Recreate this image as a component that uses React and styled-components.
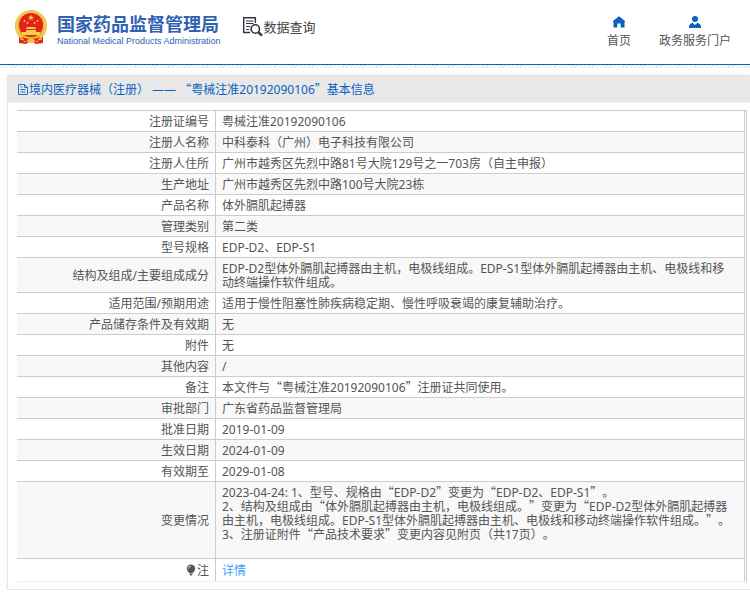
import React from "react";
import styled, { createGlobalStyle } from "styled-components"

const GlobalStyle = createGlobalStyle`
    body {
        margin: 0;
        background-color: #fff;
        color: #555;
        font-family: "Noto Sans", "Noto Sans CJK SC", sans-serif;
        font-size: 12px;
        line-height: 14px;
        text-spacing-trim: space-all;
    }
    a {
        text-decoration: none;
    }
`

const Header = styled.header`
    display: flex;
    align-items: center;
    height: 64px;
    padding: 0 19px 0 14px;
    border-bottom: 1px solid #0a62c0;
`

const Brand = styled.a`
    display: flex;
    align-items: center;
    gap: 9px;
    padding-bottom: 10px;
    color: #2f62b3;
`

const BrandText = styled.div`
    display: flex;
    flex-direction: column;
    gap: 2px;
    padding-top: 5px;
`

const BrandName = styled.h1`
    margin: 0;
    font-family: "Noto Sans CJK SC", sans-serif;
    font-size: 18px;
    font-weight: bold;
    line-height: 20px;
    white-space: nowrap;
`

const BrandEnglish = styled.span`
    font-family: "Liberation Sans", sans-serif;
    font-size: 9px;
    line-height: 12px;
    white-space: nowrap;
`

const SearchLink = styled.a`
    display: flex;
    align-items: center;
    gap: 1px;
    margin-left: 22px;
    padding-bottom: 10px;
    color: #444;
    font-size: 13px;
    white-space: nowrap;
`

const Nav = styled.nav`
    display: flex;
    gap: 28px;
    margin-left: auto;
`

const NavLink = styled.a`
    display: flex;
    flex-direction: column;
    align-items: center;
    gap: 6px;
    color: #555;
    white-space: nowrap;
    & svg {
        color: #0a62c0;
    }
`

const Hatch = styled.div`
    height: 3px;
    background: repeating-linear-gradient(135deg, #e2e2e2 0 1px, #fff 1px 3px);
`

const Panel = styled.main`
    margin: 7px 0 0 7px;
    padding-bottom: 7px;
    border: 1px solid #e6e6e6;
    border-width: 0 0 1px 1px;
    box-shadow: 0 0 5px #eee;
`

const PanelTitle = styled.h2`
    box-sizing: border-box;
    display: flex;
    align-items: center;
    gap: 1px;
    height: 28px;
    margin: 0 0 7px;
    padding: 2px 10px 0;
    border-bottom: 1px solid #eceef8;
    background-color: #e8e8e8;
    color: #0a62c0;
    font-size: 12px;
    font-weight: normal;
`

const TableWrap = styled.div`
    margin: 0 3px 0 9px;
    border-top: 1px solid #ccc;
    border-right: 3px double #ccc;
    border-bottom: 1px solid #ebeef5;
`

const Table = styled.table`
    width: 100%;
    border-spacing: 0;
    & tr:nth-child(even) {
        background-color: #f8f8f8;
    }
    & tr:last-child > * {
        border-bottom: 0;
        padding-top: 5px;
        padding-bottom: 3px;
    }
`

const Label = styled.th`
    box-sizing: border-box;
    width: 199px;
    padding: 4px 6px 2px;
    border-right: 1px solid #ccc;
    border-bottom: 1px solid #ccc;
    font-weight: normal;
    text-align: right;
    & svg {
        margin-right: 1px;
        vertical-align: -1px;
    }
`

const Value = styled.td`
    padding: 4px 10px 2px 6px;
    border-bottom: 1px solid #ccc;
    white-space: pre-line;
`

const Quote = styled.span`
    font-family: "Noto Sans CJK SC", sans-serif;
    line-height: 1px;
`

const DetailLink = styled.a`
    color: #409eff;
`

const rows = [
    { label: "注册证编号", value: "粤械注准20192090106" },
    { label: "注册人名称", value: "中科泰科（广州）电子科技有限公司" },
    { label: "注册人住所", value: "广州市越秀区先烈中路81号大院129号之一703房（自主申报）" },
    { label: "生产地址", value: "广州市越秀区先烈中路100号大院23栋" },
    { label: "产品名称", value: "体外膈肌起搏器" },
    { label: "管理类别", value: "第二类" },
    { label: "型号规格", value: "EDP-D2、EDP-S1" },
    { label: "结构及组成/主要组成成分", value: "EDP-D2型体外膈肌起搏器由主机，电极线组成。EDP-S1型体外膈肌起搏器由主机、电极线和移动终端操作软件组成。" },
    { label: "适用范围/预期用途", value: "适用于慢性阻塞性肺疾病稳定期、慢性呼吸衰竭的康复辅助治疗。" },
    { label: "产品储存条件及有效期", value: "无" },
    { label: "附件", value: "无" },
    { label: "其他内容", value: "/" },
    { label: "备注", value: "本文件与“粤械注准20192090106”注册证共同使用。" },
    { label: "审批部门", value: "广东省药品监督管理局" },
    { label: "批准日期", value: "2019-01-09" },
    { label: "生效日期", value: "2024-01-09" },
    { label: "有效期至", value: "2029-01-08" },
    {
        label: "变更情况",
        value: "2023-04-24: 1、型号、规格由“EDP-D2”变更为“EDP-D2、EDP-S1”。\n2、结构及组成由“体外膈肌起搏器由主机，电极线组成。”变更为“EDP-D2型体外膈肌起搏器由主机，电极线组成。EDP-S1型体外膈肌起搏器由主机、电极线和移动终端操作软件组成。”。\n3、注册证附件“产品技术要求”变更内容见附页（共17页）。\n\n"
    },
]

// curly quotes take the full-width form of the Chinese font
const withQuotes = text =>
    text.split(/([“”])/).map((part, i) => (
        part === "“" || part === "”" ? <Quote key={i}>{part}</Quote> : part
    ))

const Emblem = () => (
    <svg width="34" height="36" viewBox="0 0 34 36" aria-hidden="true">
        <path d="M5 26 L5 34 L12 35 L17 32 L22 35 L29 34 L29 26 Z" fill="#dd2a1e" />
        <circle cx="17" cy="17" r="16" fill="#e9b63a" />
        <circle cx="17" cy="17" r="14.5" fill="none" stroke="#f3cb55" strokeWidth="2" />
        <circle cx="17" cy="16" r="12" fill="#e3221b" />
        <path d="M17 5.5 L17.8 7.8 L20.2 7.8 L18.3 9.2 L19 11.5 L17 10.1 L15 11.5 L15.7 9.2 L13.8 7.8 L16.2 7.8 Z" fill="#f8ce46" />
        <g fill="#f8ce46">
            <circle cx="10.5" cy="12" r="0.9" />
            <circle cx="13.5" cy="14" r="0.9" />
            <circle cx="20.5" cy="14" r="0.9" />
            <circle cx="23.5" cy="12" r="0.9" />
            <path d="M13 18 H21 L22 20 H12 Z M12 21 H22 V23 H26 V26 H8 V23 H12 Z" />
        </g>
        <path d="M8 28 Q17 32 26 28 L24 32 H10 Z" fill="#e3221b" />
        <path d="M13 31 Q17 28 21 31 L20 34 H14 Z" fill="#f1c243" />
        <path d="M6 30 L10 31 M28 30 L24 31 M10 33 L12 32 M24 33 L22 32" stroke="#f3c94f" />
    </svg>
)

const SearchIcon = () => (
    <svg width="20" height="20" viewBox="0 0 20 20" fill="none" stroke="#33343f" aria-hidden="true">
        <path d="M7 15.5 H0.7 V0.7 H12.4 V6" strokeWidth="1.4" />
        <path d="M3 4 H10.5 M3 6.5 H10.5 M3 9.5 H7 M3 12.5 H6" strokeWidth="1.2" />
        <circle cx="12.3" cy="12" r="4.2" strokeWidth="1.6" />
        <path d="M15.5 15.3 L19 18.7" strokeWidth="2.4" />
    </svg>
)

const HomeIcon = () => (
    <svg width="12" height="12" viewBox="0 0 12 12" fill="currentColor" aria-hidden="true">
        <path d="M6 0.3 L12 5 V6 H11.5 V11.5 H7.7 V7.5 H4.3 V11.5 H0.5 V6 H0 V5 Z" />
    </svg>
)

const UserIcon = () => (
    <svg width="12" height="12" viewBox="0 0 12 12" fill="currentColor" aria-hidden="true">
        <circle cx="6" cy="3" r="3" />
        <path d="M0 12 V10 Q0.4 7.6 3.6 6.8 L6 9 L8.4 6.8 Q11.6 7.6 12 10 V12 Z" />
    </svg>
)

const DocumentIcon = () => (
    <svg width="10" height="11" viewBox="0 0 10 11" fill="none" stroke="currentColor" aria-hidden="true">
        <path d="M0.5 0.5 H6.5 L9.5 3.5 V10.5 H0.5 Z M6.5 0.5 V3.5 H9.5" strokeWidth="0.9" />
        <path d="M2.5 5.5 H7.5 M2.5 8 H7.5 M2.5 3 H4.5" strokeWidth="0.9" />
    </svg>
)

const BulbIcon = () => (
    <svg width="10" height="12" viewBox="0 0 10 12" aria-hidden="true">
        <path d="M5 0.5 A4.2 4.2 0 0 1 9.2 4.7 Q9 7 6.8 9 H3.2 Q1 7 0.8 4.7 A4.2 4.2 0 0 1 5 0.5 Z M3.5 9.6 H6.5 V10.6 L5.6 11.5 H4.4 L3.5 10.6 Z" fill="#555" />
        <path d="M2.4 4.6 Q2.6 2.4 4.8 2.1" fill="none" stroke="#fff" strokeWidth="0.8" />
    </svg>
)

const App = () => {
    return (
        <>
            <GlobalStyle />
            <Header>
                <Brand href="#">
                    <Emblem />
                    <BrandText>
                        <BrandName>国家药品监督管理局</BrandName>
                        <BrandEnglish>National Medical Products Administration</BrandEnglish>
                    </BrandText>
                </Brand>
                <SearchLink href="#"><SearchIcon />数据查询</SearchLink>
                <Nav>
                    <NavLink href="#"><HomeIcon />首页</NavLink>
                    <NavLink href="#"><UserIcon />政务服务门户</NavLink>
                </Nav>
            </Header>
            <Hatch />
            <Panel>
                <PanelTitle>
                    <DocumentIcon />
                    <span>{withQuotes("境内医疗器械（注册） —— “粤械注准20192090106”基本信息")}</span>
                </PanelTitle>
                <TableWrap>
                    <Table>
                        <tbody>
                            {rows.map(row => (
                                <tr key={row.label}>
                                    <Label scope="row">{row.label}</Label>
                                    <Value>{withQuotes(row.value)}</Value>
                                </tr>
                            ))}
                            <tr>
                                <Label scope="row"><BulbIcon />注</Label>
                                <Value><DetailLink href="#">详情</DetailLink></Value>
                            </tr>
                        </tbody>
                    </Table>
                </TableWrap>
            </Panel>
        </>
    );
};
export default App;
